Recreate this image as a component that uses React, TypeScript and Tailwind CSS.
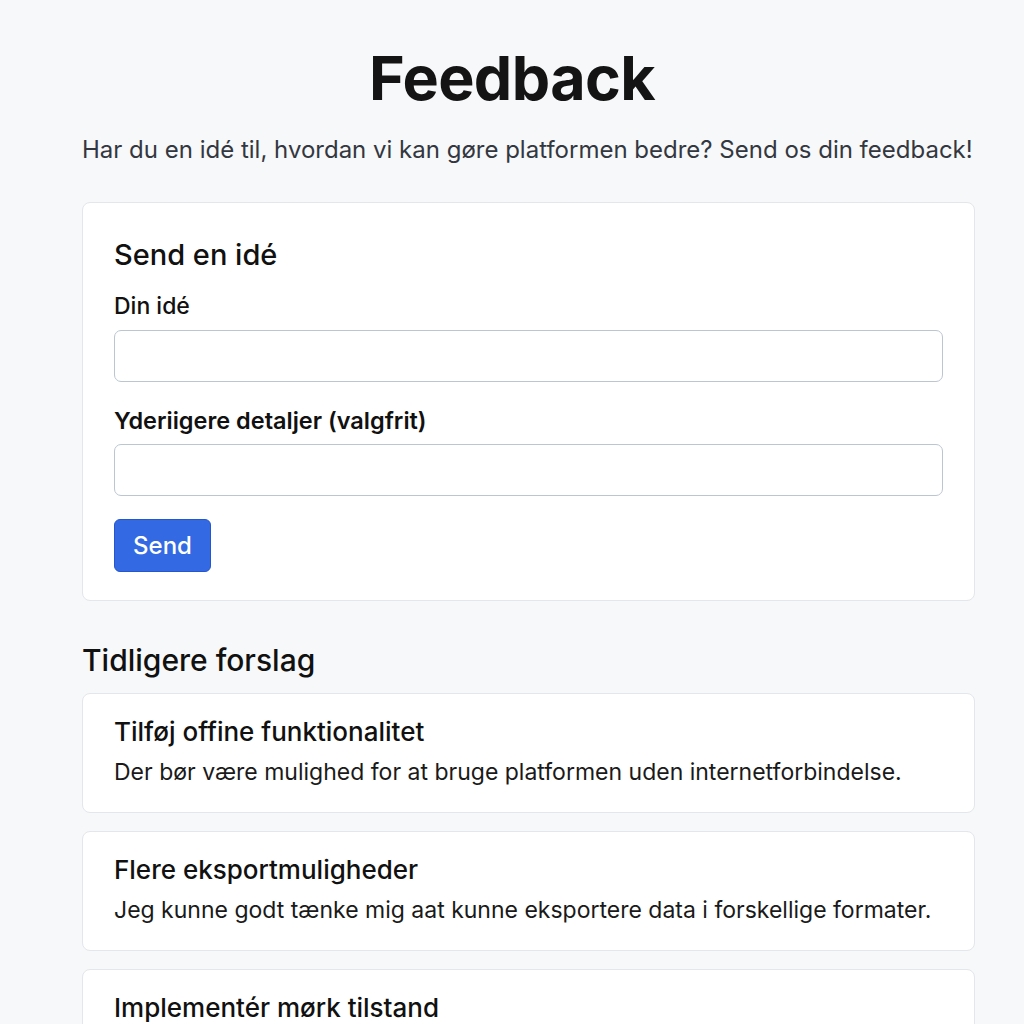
import React from "react";

const suggestions = [
  {
    title: "Tilføj offine funktionalitet",
    text: "Der bør være mulighed for at bruge platformen uden internetforbindelse.",
  },
  {
    title: "Flere eksportmuligheder",
    text: "Jeg kunne godt tænke mig aat kunne eksportere data i forskellige formater.",
  },
  {
    title: "Implementér mørk tilstand",
    text: "Det ville være rart med et mørkt tema til brug om aftenen.",
  },
];

export default function App() {
  const [idea, setIdea] = React.useState("");
  const [details, setDetails] = React.useState("");

  return (
    <div
      className="min-h-screen bg-[#f7f8fa] text-[#111111] pt-[42px] pb-10"
      style={{ fontFamily: "Inter, 'Noto Sans', sans-serif" }}
    >
      <h1 className="text-center text-[61px] leading-[72px] font-bold tracking-[-0.01em] text-[#141414]">
        Feedback
      </h1>

      <div className="pl-[82px] pr-[49px]">
        <p className="mt-[20px] text-[24px] leading-[32px] text-[#333740] whitespace-nowrap">
          Har du en idé til, hvordan vi kan gøre platformen bedre? Send os din feedback!
        </p>

        {/* formular */}
        <div className="mt-[36px] rounded-lg border border-[#e3e6ea] bg-white px-[31px] pt-[34px] pb-[28px]">
          <h2 className="text-[29px] leading-[36px] font-medium">Send en idé</h2>

          <label className="mt-[18px] block text-[23px] leading-[30px] font-medium">
            Din idé
          </label>
          <input
            value={idea}
            onChange={(e) => setIdea(e.target.value)}
            className="mt-[9px] block h-[52px] w-full rounded-[7px] border border-[#bcc6d1] bg-white px-3 text-[20px] outline-none"
          />

          <label className="mt-[24px] block text-[23.5px] leading-[30px] font-semibold">
            Yderiigere detaljer (valgfrit)
          </label>
          <input
            value={details}
            onChange={(e) => setDetails(e.target.value)}
            className="mt-[8px] block h-[52px] w-full rounded-[7px] border border-[#bcc6d1] bg-white px-3 text-[20px] outline-none"
          />

          <button className="mt-[23px] h-[53px] w-[97px] rounded-[6px] border border-[#2556cc] bg-[#3369e3] text-[24px] font-medium text-white">
            Send
          </button>
        </div>

        <h2 className="mt-[39px] text-[30px] leading-[40px] font-medium">Tidligere forslag</h2>

        <div className="mt-[13px] flex flex-col gap-[18px]">
          {suggestions.map((s) => (
            <div
              key={s.title}
              className="h-[120px] rounded-lg border border-[#e3e6ea] bg-white px-[31px] pt-[21px]"
            >
              <h3 className="text-[26px] leading-[34px] font-medium">{s.title}</h3>
              <p className="mt-[8px] text-[23px] leading-[30px] text-[#1a1a1a]">{s.text}</p>
            </div>
          ))}
        </div>
      </div>
    </div>
  );
}
